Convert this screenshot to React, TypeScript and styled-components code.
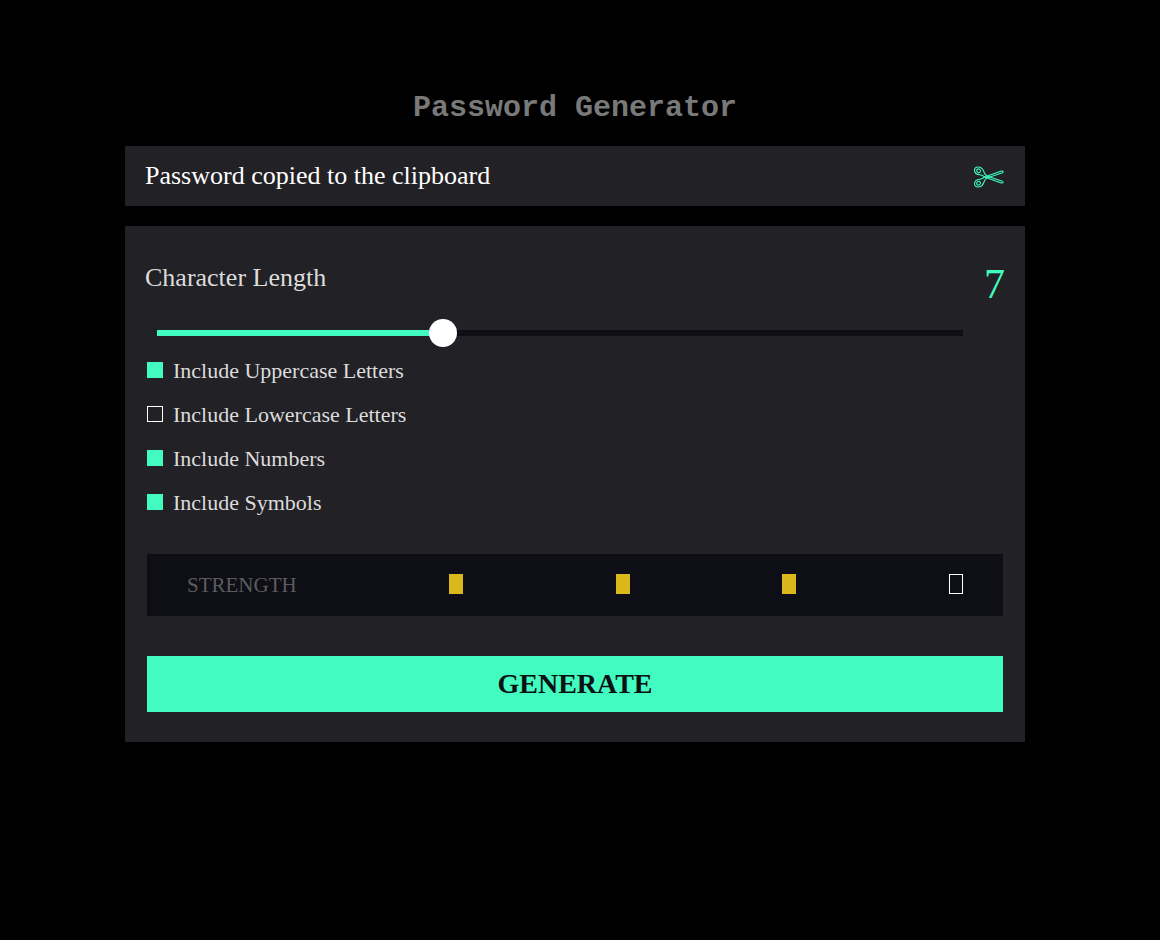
import React, { useState } from "react";
import styled, { createGlobalStyle } from "styled-components";

const mint = "#41fbbf";

const GlobalStyle = createGlobalStyle`
  * { box-sizing: border-box; }
  body {
    margin: 0;
    background: #000;
    color: #dcdcdc;
    font-family: Georgia, "Liberation Serif", serif;
  }
`;

const Page = styled.main`
  min-height: 100vh;
  padding: 88px 20px 40px 10px;
`;

const Container = styled.div`
  max-width: 900px;
  margin: 0 auto;
`;

const Title = styled.h1`
  margin: 0 0 18px;
  color: #787a79;
  font: bold 30px/40px "Courier New", "Liberation Mono", monospace;
  text-align: center;
`;

const PasswordBar = styled.div`
  display: flex;
  align-items: center;
  justify-content: space-between;
  height: 60px;
  margin-bottom: 20px;
  padding: 0 20px;
  background: #222126;
`;

const Message = styled.output`
  color: #fff;
  font: 26px/30px "Times New Roman", "Liberation Serif", serif;
`;

const CopyButton = styled.button`
  display: flex;
  padding: 2px 0 0;
  border: 0;
  background: none;
  color: ${mint};
  cursor: pointer;
`;

const Panel = styled.form`
  padding: 32px 20px 30px;
  background: #222126;
`;

const LengthRow = styled.div`
  display: flex;
  align-items: flex-start;
  justify-content: space-between;
`;

const LengthLabel = styled.label`
  font-size: 26px;
  line-height: 40px;
`;

const LengthValue = styled.output`
  color: ${mint};
  font-size: 42px;
  line-height: 52px;
`;

const Slider = styled.input<{ $fill: number }>`
  display: block;
  appearance: none;
  width: calc(100% - 54px);
  height: 28px;
  margin: 9px 42px 15px 12px;
  background: none;
  cursor: pointer;

  &::-webkit-slider-runnable-track {
    height: 6px;
    background: linear-gradient(to right, ${mint} ${(p) => p.$fill}%, #0e0e16 ${(p) => p.$fill}%);
  }

  &::-webkit-slider-thumb {
    appearance: none;
    width: 28px;
    height: 28px;
    margin-top: -11px;
    border-radius: 50%;
    background: #fff;
  }
`;

const Options = styled.div`
  display: grid;
  gap: 28px;
  margin: 0 2px;
`;

const Option = styled.label`
  display: flex;
  align-items: flex-start;
  gap: 10px;
  height: 16px;
  font-size: 22px;
  line-height: 18px;
`;

const Checkbox = styled.input`
  appearance: none;
  width: 16px;
  height: 16px;
  margin: 0;
  border: 1px solid #fff;

  &:checked {
    border-color: ${mint};
    background: ${mint};
  }
`;

const Strength = styled.div`
  display: flex;
  align-items: flex-start;
  justify-content: space-between;
  height: 62px;
  margin: 44px 2px 40px;
  padding: 20px 40px;
  background: #0e0e16;
`;

const StrengthLabel = styled.span`
  color: #5c5c5c;
  font-size: 21px;
  line-height: 22px;
`;

const Level = styled.span<{ $on: boolean }>`
  width: 14px;
  height: 20px;
  border: 1px solid ${(p) => (p.$on ? "#dab71a" : "#fff")};
  background: ${(p) => (p.$on ? "#dab71a" : "transparent")};
`;

const GenerateButton = styled.button`
  display: block;
  width: calc(100% - 4px);
  height: 56px;
  margin: 0 2px;
  padding: 0;
  border: 0;
  background: ${mint};
  color: #0b1014;
  font: bold 28px/32px Georgia, "Liberation Serif", serif;
  cursor: pointer;
`;

const Scissors = () => (
  <svg width="32" height="22" viewBox="0 0 32 22" fill="none" stroke="currentColor" strokeWidth="1.1" strokeLinejoin="round" aria-hidden="true">
    <path d="M12.3 10.8 27.6 5.2C29.2 4.7 30.2 5.1 30.1 5.9C30 6.6 29.4 6.8 28.6 7.1L14.6 11.7C11.6 12.8 11.8 14 10.6 17C9.4 19.9 7.2 21 5 21C2.8 21 1.4 19.6 1.5 17.6C1.7 14.8 4.3 13.4 6.8 13.2C9.4 13 10.3 11.8 12.3 10.8Z" />
    <path d="M12.3 11.2 27.6 16.8C29.2 17.3 30.2 16.9 30.1 16.1C30 15.4 29.4 15.2 28.6 14.9L14.6 10.3C11.6 9.2 11.8 8 10.6 5C9.4 2.1 7.2 1 5 1C2.8 1 1.4 2.4 1.5 4.4C1.7 7.2 4.3 8.6 6.8 8.8C9.4 9 10.3 10.2 12.3 11.2Z" />
    <ellipse cx="5.6" cy="4.8" rx="2" ry="1.7" transform="rotate(35 5.6 4.8)" />
    <ellipse cx="5.6" cy="17.2" rx="2" ry="1.7" transform="rotate(-35 5.6 17.2)" />
  </svg>
);

const optionNames = ["Uppercase Letters", "Lowercase Letters", "Numbers", "Symbols"];

export default function App() {
  const [length, setLength] = useState(7);
  const [enabled, setEnabled] = useState([true, false, true, true]);
  const strength = enabled.filter(Boolean).length;

  const toggle = (index: number) =>
    setEnabled((current) => current.map((on, i) => (i === index ? !on : on)));

  return (
    <>
      <GlobalStyle />
      <Page>
        <Container>
          <Title>Password Generator</Title>
          <PasswordBar>
            <Message>Password copied to the clipboard</Message>
            <CopyButton type="button" aria-label="Copy password">
              <Scissors />
            </CopyButton>
          </PasswordBar>
          <Panel onSubmit={(event) => event.preventDefault()}>
            <LengthRow>
              <LengthLabel htmlFor="length">Character Length</LengthLabel>
              <LengthValue htmlFor="length">{length}</LengthValue>
            </LengthRow>
            <Slider
              id="length"
              type="range"
              min={0}
              max={20}
              value={length}
              $fill={(length / 20) * 100}
              onChange={(event) => setLength(Number(event.target.value))}
            />
            <Options>
              {optionNames.map((name, index) => (
                <Option key={name}>
                  <Checkbox type="checkbox" checked={enabled[index]} onChange={() => toggle(index)} />
                  {`Include ${name}`}
                </Option>
              ))}
            </Options>
            <Strength>
              <StrengthLabel>STRENGTH</StrengthLabel>
              {optionNames.map((name, index) => (
                <Level key={name} $on={index < strength} />
              ))}
            </Strength>
            <GenerateButton type="submit">GENERATE</GenerateButton>
          </Panel>
        </Container>
      </Page>
    </>
  );
}
